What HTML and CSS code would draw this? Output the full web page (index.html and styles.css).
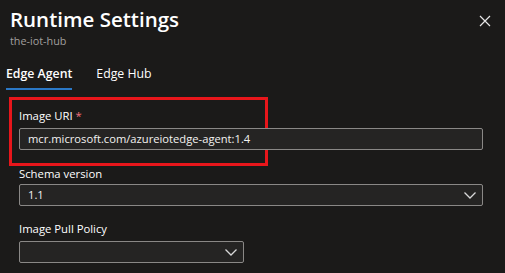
FILE: index.html
```html
<!DOCTYPE html>
<html lang="en">
<head>
    <meta charset="UTF-8">
    <title>Runtime Settings</title>
    <link rel="stylesheet" href="styles.css">
</head>
<body>
    <div class="panel">
        <div class="header">
            <div>
                <h1>Runtime Settings</h1>
                <div class="subtitle">the-iot-hub</div>
            </div>
            <button class="close" aria-label="Close">
                <svg width="12" height="12" viewBox="0 0 12 12"><path d="M1 1 L11 11 M11 1 L1 11" stroke="#e6e6e6" stroke-width="1.2" fill="none"/></svg>
            </button>
        </div>

        <div class="tabs">
            <div class="tab active">Edge Agent</div>
            <div class="tab">Edge Hub</div>
        </div>

        <div class="highlight-box">
            <label>Image URI <span class="req">*</span></label>
            <div class="field">mcr.microsoft.com/azureiotedge-agent:1.4</div>
        </div>

        <label class="schema">Schema version</label>
        <div class="field select">
            <span>1.1</span>
            <svg class="chev" width="12" height="7" viewBox="0 0 12 7"><path d="M0.5 0.5 L6 6 L11.5 0.5" stroke="#d8d8d8" stroke-width="1.3" fill="none"/></svg>
        </div>

        <label class="pull">Image Pull Policy</label>
        <div class="field select short">
            <span></span>
            <svg class="chev" width="12" height="7" viewBox="0 0 12 7"><path d="M0.5 0.5 L6 6 L11.5 0.5" stroke="#d8d8d8" stroke-width="1.3" fill="none"/></svg>
        </div>
    </div>
</body>
</html>
```

FILE: styles.css
```css
* {
    box-sizing: border-box;
    font-family: "Open Sans", "Noto Sans", sans-serif;
}

body {
    margin: 0;
    background: #1b1a19;
    color: #ffffff;
}

.panel {
    padding: 6px 14px 0 10px;
    display: flex;
    flex-direction: column;
}

.header {
    display: flex;
    justify-content: space-between;
    align-items: flex-start;
}

h1 {
    margin: 0;
    font-size: 20.5px;
    font-weight: 600;
    line-height: 26px;
}

.subtitle {
    font-size: 10.8px;
    color: #a19f9d;
    line-height: 14px;
    margin-top: 2px;
}

.close {
    background: none;
    border: none;
    padding: 0;
    margin: 9px 0 0 0;
    width: 12px;
    height: 12px;
    cursor: pointer;
}

.close svg {
    display: block;
}

.tabs {
    display: flex;
    gap: 24px;
    margin: 16px 0 0 -4px;
}

.tab {
    font-size: 12.3px;
    line-height: 20px;
    padding-bottom: 4px;
    border-bottom: 2px solid transparent;
}

.tab.active {
    font-weight: 600;
    border-bottom-color: #2b78c6;
}

.highlight-box {
    border: 3px solid #e8161b;
    width: 259px;
    margin: 7px 0 0 -1px;
    padding: 8px 0 13px 7px;
    display: flex;
    flex-direction: column;
}

label {
    font-size: 11.3px;
    line-height: 16px;
    color: #ffffff;
    margin-left: 9px;
}

.highlight-box label {
    margin-left: 0;
}

.req {
    color: #f1707b;
}

.field {
    width: 464px;
    height: 22px;
    margin-top: 4px;
    background: #252423;
    border: 1px solid #8a8886;
    border-radius: 2px;
    font-size: 11.2px;
    line-height: 20px;
    padding: 0 6px 0 8px;
    color: #f3f2f1;
    white-space: nowrap;
}

.highlight-box .field {
    margin-right: -230px;
}

.select {
    margin-left: 9px;
    display: flex;
    justify-content: space-between;
    align-items: center;
}

.schema {
    margin-top: 0;
}

.schema + .field {
    margin-top: 2px;
}

.chev {
    display: block;
}

.pull {
    margin-top: 15px;
}

.short {
    width: 225px;
}
```
